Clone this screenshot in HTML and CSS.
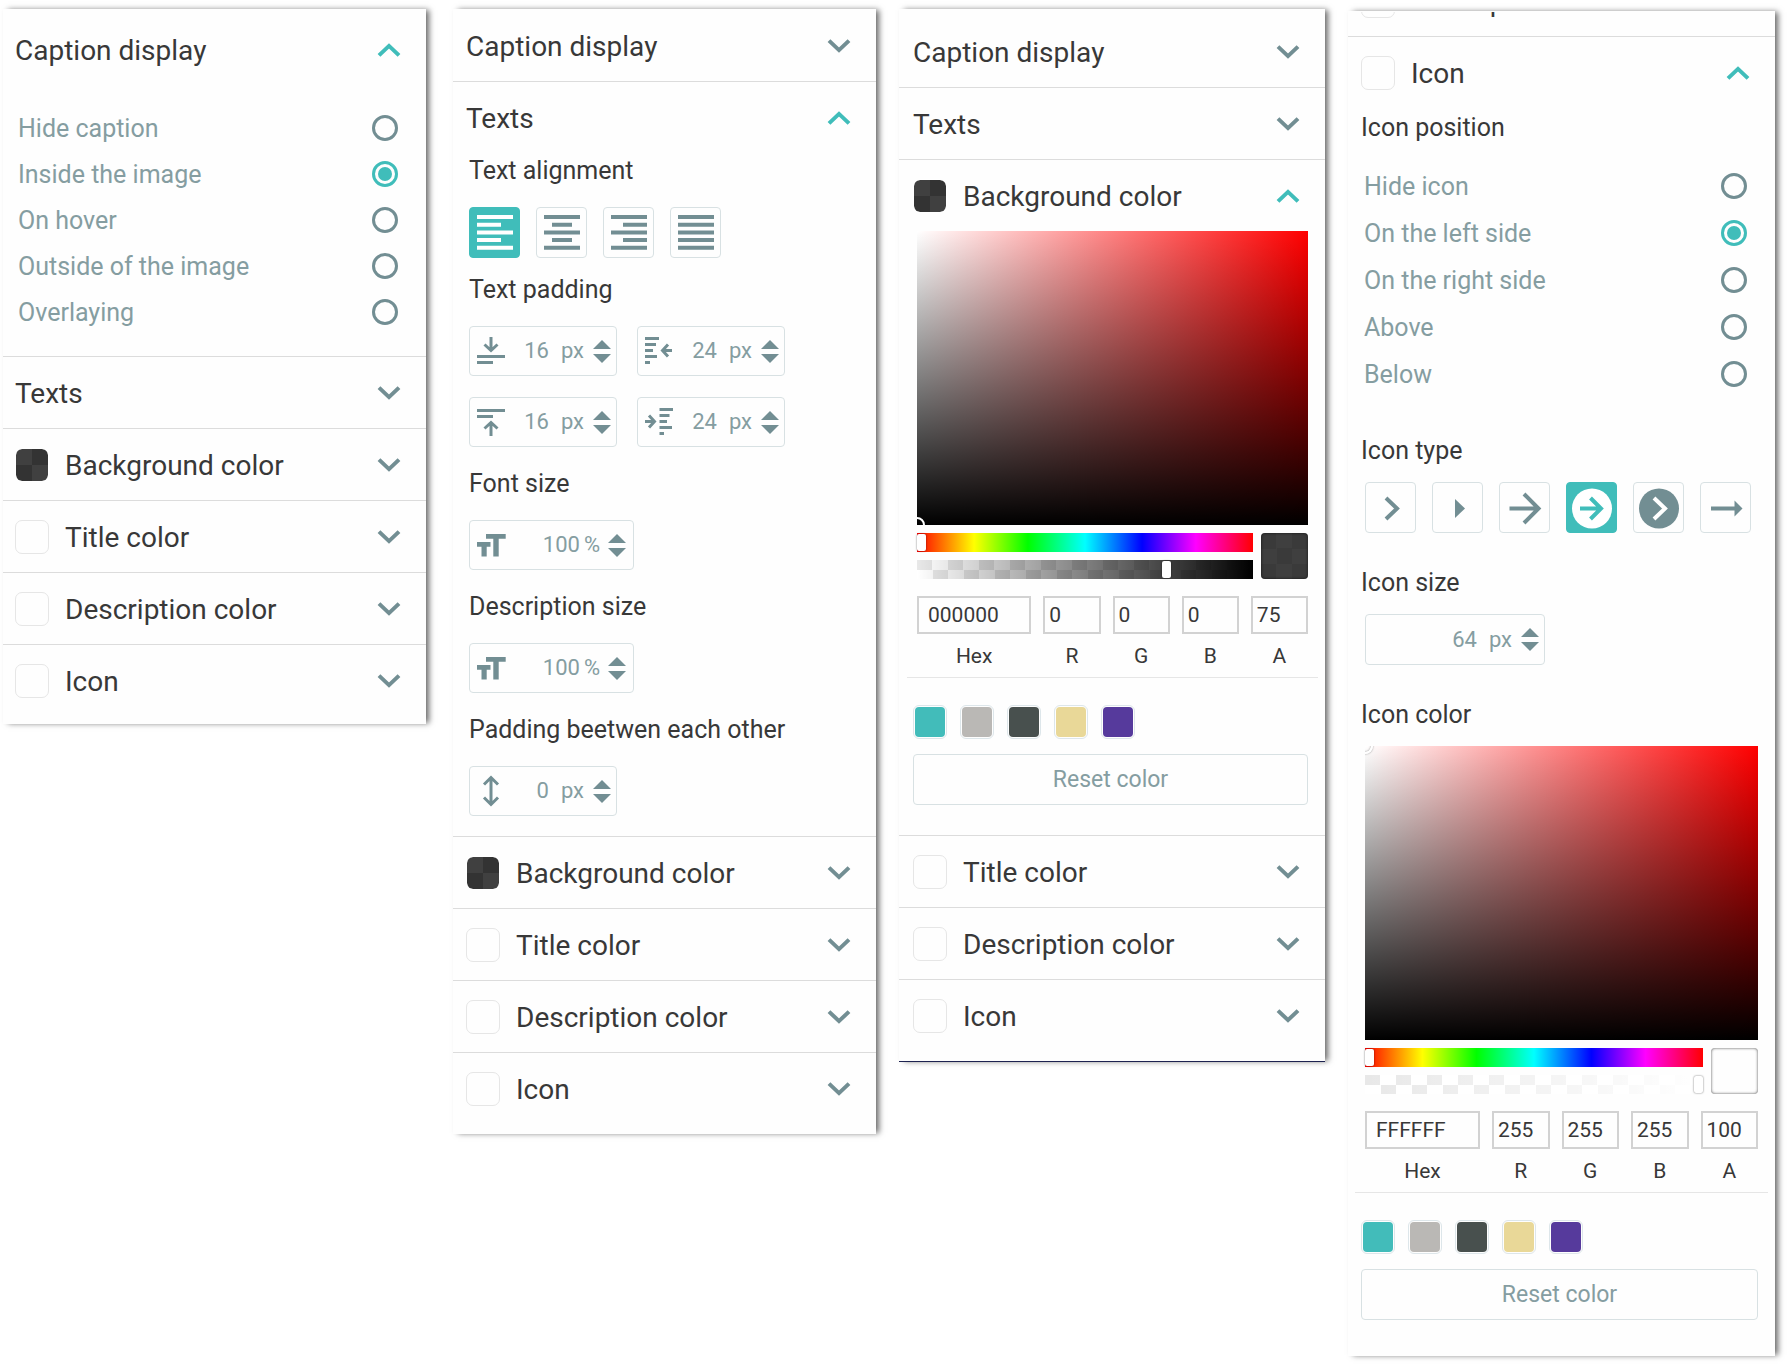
FILE: index.html
```html
<!DOCTYPE html>
<html lang="en">
<head>
<meta charset="utf-8">
<meta name="viewport" content="width=device-width, initial-scale=1">
<title>Caption settings</title>
<link rel="stylesheet" href="styles.css">
</head>
<body>
<svg class="sprite" aria-hidden="true">
  <symbol id="chevron-down" viewBox="0 0 24 14"><path d="M2 1.6 12 11.1 22 1.6" fill="none" stroke="currentColor" stroke-width="4"/></symbol>
  <symbol id="chevron-up" viewBox="0 0 24 14"><path d="M2 12.4 12 2.9 22 12.4" fill="none" stroke="currentColor" stroke-width="4"/></symbol>
  <symbol id="arrow-up" viewBox="0 0 18 9"><path d="M0 9 9 0 18 9z" fill="currentColor"/></symbol>
  <symbol id="arrow-down" viewBox="0 0 18 9"><path d="M0 0 9 9 18 0z" fill="currentColor"/></symbol>
  <symbol id="text-size" viewBox="0 0 29 23"><path d="M0 8h13.5v4.7H9.7v9.8H4.5v-9.8H0zM9 0h19.7v4.7h-7v17.8h-5.4V4.7H9z" fill="currentColor"/></symbol>
</svg>

<main class="board">

  <section class="panel panel-display">
    <h2 class="row"><button type="button" class="toggle open" aria-expanded="true"><span class="name">Caption display</span><svg class="chevron"><use href="#chevron-up"/></svg></button></h2>
    <div class="options">
      <label class="option">Hide caption<input type="radio" name="caption"></label>
      <label class="option">Inside the image<input type="radio" name="caption" checked></label>
      <label class="option">On hover<input type="radio" name="caption"></label>
      <label class="option">Outside of the image<input type="radio" name="caption"></label>
      <label class="option">Overlaying<input type="radio" name="caption"></label>
    </div>
    <h2 class="row"><button type="button" class="toggle"><span class="name">Texts</span><svg class="chevron"><use href="#chevron-down"/></svg></button></h2>
    <h2 class="row"><button type="button" class="toggle"><span class="swatch dark"></span><span class="name">Background color</span><svg class="chevron"><use href="#chevron-down"/></svg></button></h2>
    <h2 class="row"><button type="button" class="toggle"><span class="swatch"></span><span class="name">Title color</span><svg class="chevron"><use href="#chevron-down"/></svg></button></h2>
    <h2 class="row"><button type="button" class="toggle"><span class="swatch"></span><span class="name">Description color</span><svg class="chevron"><use href="#chevron-down"/></svg></button></h2>
    <h2 class="row"><button type="button" class="toggle"><span class="swatch"></span><span class="name">Icon</span><svg class="chevron"><use href="#chevron-down"/></svg></button></h2>
  </section>

  <section class="panel panel-texts">
    <h2 class="row"><button type="button" class="toggle"><span class="name">Caption display</span><svg class="chevron"><use href="#chevron-down"/></svg></button></h2>
    <h2 class="row"><button type="button" class="toggle open" aria-expanded="true"><span class="name">Texts</span><svg class="chevron"><use href="#chevron-up"/></svg></button></h2>
    <div class="fields">
      <div class="field align-field">
        <h3 class="label">Text alignment</h3>
        <div class="tiles">
          <button type="button" class="tile active" aria-label="Left"><svg width="36" height="35" viewBox="0 0 36 35"><path d="M0 2h36M0 9.7h24M0 17.4h36M0 25h24M0 32.7h36"/></svg></button>
          <button type="button" class="tile" aria-label="Center"><svg width="36" height="35" viewBox="0 0 36 35"><path d="M0 2h36M8 9.7h20M0 17.4h36M8 25h20M0 32.7h36"/></svg></button>
          <button type="button" class="tile" aria-label="Right"><svg width="36" height="35" viewBox="0 0 36 35"><path d="M0 2h36M12 9.7h24M0 17.4h36M12 25h24M0 32.7h36"/></svg></button>
          <button type="button" class="tile" aria-label="Justify"><svg width="36" height="35" viewBox="0 0 36 35"><path d="M0 2h36M0 9.7h36M0 17.4h36M0 25h36M0 32.7h36"/></svg></button>
        </div>
      </div>
      <div class="field">
        <h3 class="label">Text padding</h3>
        <div class="pairs">
          <div class="stepper">
            <svg class="glyph" width="28" height="28" viewBox="0 0 28 28"><path d="M14 0v13M7.500 7.500 14 13.500l6.500-6M0 19.500h28M0 25.500h16"/></svg>
            <input type="number" value="16" aria-label="Bottom padding"><span class="unit">px</span>
            <span class="spin"><button type="button" aria-label="Increase"><svg><use href="#arrow-up"/></svg></button><button type="button" aria-label="Decrease"><svg><use href="#arrow-down"/></svg></button></span>
          </div>
          <div class="stepper">
            <svg class="glyph" width="28" height="28" viewBox="0 0 28 28"><path d="M0 1.500h14M0 7.500h11M0 13.500h8M0 19.500h12M0 25.500h5M27 13.500h-9M23 7.500l-5.500 6 5.500 6"/></svg>
            <input type="number" value="24" aria-label="Right padding"><span class="unit">px</span>
            <span class="spin"><button type="button" aria-label="Increase"><svg><use href="#arrow-up"/></svg></button><button type="button" aria-label="Decrease"><svg><use href="#arrow-down"/></svg></button></span>
          </div>
          <div class="stepper">
            <svg class="glyph" width="28" height="28" viewBox="0 0 28 28"><path d="M14 28V15M7.500 20.500 14 14.500l6.500 6M0 2.500h28M0 8.500h16"/></svg>
            <input type="number" value="16" aria-label="Top padding"><span class="unit">px</span>
            <span class="spin"><button type="button" aria-label="Increase"><svg><use href="#arrow-up"/></svg></button><button type="button" aria-label="Decrease"><svg><use href="#arrow-down"/></svg></button></span>
          </div>
          <div class="stepper">
            <svg class="glyph" width="28" height="28" viewBox="0 0 28 28"><path d="M14.500 1.500h13.500M14.500 7.500h10M14.500 13.500h7.500M14.500 19.500h12.500M14.500 25.500h4.500M0 13.500h9M4 7.500l5.500 6-5.500 6"/></svg>
            <input type="number" value="24" aria-label="Left padding"><span class="unit">px</span>
            <span class="spin"><button type="button" aria-label="Increase"><svg><use href="#arrow-up"/></svg></button><button type="button" aria-label="Decrease"><svg><use href="#arrow-down"/></svg></button></span>
          </div>
        </div>
      </div>
      <div class="field">
        <label class="label" for="font-size">Font size</label>
        <div class="stepper percent">
          <svg class="glyph" width="29" height="23"><use href="#text-size"/></svg>
          <input type="number" id="font-size" value="100"><span class="unit">%</span>
          <span class="spin"><button type="button" aria-label="Increase"><svg><use href="#arrow-up"/></svg></button><button type="button" aria-label="Decrease"><svg><use href="#arrow-down"/></svg></button></span>
        </div>
      </div>
      <div class="field">
        <label class="label" for="description-size">Description size</label>
        <div class="stepper percent">
          <svg class="glyph" width="29" height="23"><use href="#text-size"/></svg>
          <input type="number" id="description-size" value="100"><span class="unit">%</span>
          <span class="spin"><button type="button" aria-label="Increase"><svg><use href="#arrow-up"/></svg></button><button type="button" aria-label="Decrease"><svg><use href="#arrow-down"/></svg></button></span>
        </div>
      </div>
      <div class="field">
        <label class="label" for="between">Padding beetwen each other</label>
        <div class="stepper">
          <svg class="glyph" width="28" height="32" viewBox="0 0 28 32"><path stroke-width="3.500" d="M14 3v26M7 9.500 14 2.500l7 7M7 22.500l7 7 7-7"/></svg>
          <input type="number" id="between" value="0"><span class="unit">px</span>
          <span class="spin"><button type="button" aria-label="Increase"><svg><use href="#arrow-up"/></svg></button><button type="button" aria-label="Decrease"><svg><use href="#arrow-down"/></svg></button></span>
        </div>
      </div>
    </div>
    <h2 class="row"><button type="button" class="toggle"><span class="swatch dark"></span><span class="name">Background color</span><svg class="chevron"><use href="#chevron-down"/></svg></button></h2>
    <h2 class="row"><button type="button" class="toggle"><span class="swatch"></span><span class="name">Title color</span><svg class="chevron"><use href="#chevron-down"/></svg></button></h2>
    <h2 class="row"><button type="button" class="toggle"><span class="swatch"></span><span class="name">Description color</span><svg class="chevron"><use href="#chevron-down"/></svg></button></h2>
    <h2 class="row"><button type="button" class="toggle"><span class="swatch"></span><span class="name">Icon</span><svg class="chevron"><use href="#chevron-down"/></svg></button></h2>
  </section>

  <section class="panel panel-background">
    <h2 class="row"><button type="button" class="toggle"><span class="name">Caption display</span><svg class="chevron"><use href="#chevron-down"/></svg></button></h2>
    <h2 class="row"><button type="button" class="toggle"><span class="name">Texts</span><svg class="chevron"><use href="#chevron-down"/></svg></button></h2>
    <h2 class="row"><button type="button" class="toggle open" aria-expanded="true"><span class="swatch dark"></span><span class="name">Background color</span><svg class="chevron"><use href="#chevron-up"/></svg></button></h2>
    <div class="picker picker-black">
      <div class="canvas"><span class="handle"></span></div>
      <div class="sliders">
        <div class="tracks">
          <input type="range" class="hue" min="0" max="360" value="0" aria-label="Hue">
          <input type="range" class="alpha" min="0" max="100" value="75" aria-label="Opacity">
        </div>
        <span class="preview"></span>
      </div>
      <div class="channels">
        <label><input type="text" value="000000">Hex</label>
        <label><input type="text" value="0">R</label>
        <label><input type="text" value="0">G</label>
        <label><input type="text" value="0">B</label>
        <label><input type="text" value="75">A</label>
      </div>
      <hr>
      <div class="presets">
        <button type="button" class="preset teal" aria-label="Teal"></button>
        <button type="button" class="preset grey" aria-label="Grey"></button>
        <button type="button" class="preset slate" aria-label="Slate"></button>
        <button type="button" class="preset sand" aria-label="Sand"></button>
        <button type="button" class="preset violet" aria-label="Violet"></button>
      </div>
      <button type="button" class="reset">Reset color</button>
    </div>
    <h2 class="row"><button type="button" class="toggle"><span class="swatch"></span><span class="name">Title color</span><svg class="chevron"><use href="#chevron-down"/></svg></button></h2>
    <h2 class="row"><button type="button" class="toggle"><span class="swatch"></span><span class="name">Description color</span><svg class="chevron"><use href="#chevron-down"/></svg></button></h2>
    <h2 class="row"><button type="button" class="toggle"><span class="swatch"></span><span class="name">Icon</span><svg class="chevron"><use href="#chevron-down"/></svg></button></h2>
  </section>

  <section class="panel panel-icon">
    <h2 class="row scrolled"><button type="button" class="toggle"><span class="swatch"></span><span class="name">Description color</span><svg class="chevron"><use href="#chevron-down"/></svg></button></h2>
    <h2 class="row"><button type="button" class="toggle open" aria-expanded="true"><span class="swatch"></span><span class="name">Icon</span><svg class="chevron"><use href="#chevron-up"/></svg></button></h2>
    <h3 class="label">Icon position</h3>
    <div class="options">
      <label class="option">Hide icon<input type="radio" name="icon"></label>
      <label class="option">On the left side<input type="radio" name="icon" checked></label>
      <label class="option">On the right side<input type="radio" name="icon"></label>
      <label class="option">Above<input type="radio" name="icon"></label>
      <label class="option">Below<input type="radio" name="icon"></label>
    </div>
    <h3 class="label">Icon type</h3>
    <div class="tiles">
      <button type="button" class="tile" aria-label="Chevron"><svg width="44" height="44" viewBox="0 0 44 44"><path d="M17 12 28 22.500 17 33"/></svg></button>
      <button type="button" class="tile" aria-label="Triangle"><svg width="44" height="44" viewBox="0 0 44 44"><path class="solid" d="M19 13 29 22.500 19 32z"/></svg></button>
      <button type="button" class="tile" aria-label="Arrow"><svg width="44" height="44" viewBox="0 0 44 44"><path d="M6.500 22.500H36M21 8 35.500 22.500 21 37"/></svg></button>
      <button type="button" class="tile active" aria-label="Circled arrow"><svg width="44" height="44" viewBox="0 0 44 44"><circle class="solid" cx="22" cy="22.500" r="20"/><path class="cut" d="M10 22.500H31M20.500 12 31 22.500 20.500 33"/></svg></button>
      <button type="button" class="tile" aria-label="Circled chevron"><svg width="44" height="44" viewBox="0 0 44 44"><circle class="solid" cx="22" cy="22.500" r="20"/><path class="cut" d="M17 12 28 22.500 17 33"/></svg></button>
      <button type="button" class="tile" aria-label="Long arrow"><svg width="44" height="44" viewBox="0 0 44 44"><path d="M7 22.500H32"/><path class="solid" d="M30.500 14.500 38.500 22.500 30.500 30.500z"/></svg></button>
    </div>
    <label class="label" for="icon-size">Icon size</label>
    <div class="stepper wide">
      <input type="number" id="icon-size" value="64"><span class="unit">px</span>
      <span class="spin"><button type="button" aria-label="Increase"><svg><use href="#arrow-up"/></svg></button><button type="button" aria-label="Decrease"><svg><use href="#arrow-down"/></svg></button></span>
    </div>
    <h3 class="label">Icon color</h3>
    <div class="picker picker-white">
      <div class="canvas"><span class="handle"></span></div>
      <div class="sliders">
        <div class="tracks">
          <input type="range" class="hue" min="0" max="360" value="0" aria-label="Hue">
          <input type="range" class="alpha" min="0" max="100" value="100" aria-label="Opacity">
        </div>
        <span class="preview"></span>
      </div>
      <div class="channels">
        <label><input type="text" value="FFFFFF">Hex</label>
        <label><input type="text" value="255">R</label>
        <label><input type="text" value="255">G</label>
        <label><input type="text" value="255">B</label>
        <label><input type="text" value="100">A</label>
      </div>
      <hr>
      <div class="presets">
        <button type="button" class="preset teal" aria-label="Teal"></button>
        <button type="button" class="preset grey" aria-label="Grey"></button>
        <button type="button" class="preset slate" aria-label="Slate"></button>
        <button type="button" class="preset sand" aria-label="Sand"></button>
        <button type="button" class="preset violet" aria-label="Violet"></button>
      </div>
      <button type="button" class="reset">Reset color</button>
    </div>
  </section>

</main>
</body>
</html>
```
FILE: styles.css
```css
:root {
  --teal: #40bdba;
  --slate: #728e93;
  --soft: #859da1;
  --ink: #383838;
  --line: #dcdcdc;
  --box: #d8e1e3;
}

* {
  box-sizing: border-box;
}

body {
  margin: 0;
  background: #fff;
  color: var(--ink);
  font-family: Roboto, "Liberation Sans", sans-serif;
}

button,
input {
  margin: 0;
  padding: 0;
  border: 0;
  background: none;
  color: inherit;
  font: inherit;
}

h2,
h3 {
  margin: 0;
  font-weight: 400;
}

svg {
  display: block;
}

.sprite {
  display: none;
}

/* Panels */

.board {
  display: flex;
  align-items: flex-start;
  padding: 9px 15px 9px 3px;
}

.panel {
  --inset: 13px;
  flex: 423 1 0;
  min-width: 0;
  margin-left: 23px;
  background: #fefefe;
  box-shadow: 4px 0 6px -1px rgba(0, 0, 0, 0.6);
}

.panel-display {
  --inset: 12px;
  margin-left: 0;
  padding: 4px 0 8px;
}

.panel-texts {
  margin-left: 27px;
  padding-bottom: 10px;
}

.panel-background {
  --inset: 14px;
  flex-grow: 426;
  padding: 6px 0 10px;
  border-bottom: 1px solid #1d2250;
}

.panel-icon {
  flex-grow: 427;
  margin-top: 2px;
  padding-bottom: 36px;
}

.row {
  border-top: 1px solid var(--line);
  font-size: 28px;
  line-height: 32px;
}

.row:first-child {
  border-top-color: transparent;
}

.toggle {
  display: flex;
  align-items: center;
  width: 100%;
  height: 71px;
  padding: 0 25px 0 var(--inset);
  text-align: left;
}

.name {
  flex: 1;
  padding-top: 3px;
}

.chevron {
  width: 24px;
  height: 14px;
  color: var(--slate);
}

.open .chevron {
  color: var(--teal);
}

.scrolled {
  display: flex;
  align-items: flex-end;
  height: 25px;
  overflow: hidden;
}

.scrolled .toggle {
  flex-shrink: 0;
}

.swatch {
  width: 34px;
  height: 34px;
  margin-right: 16px;
  border: 1px solid #e6e6e6;
  border-radius: 7px;
}

.swatch.dark {
  border-color: #fff;
  background: conic-gradient(#333 25%, #404040 0 50%, #333 0 75%, #404040 0) padding-box;
}

/* Radio lists */

.options {
  padding: 21px 28px 20px 15px;
}

.option {
  display: flex;
  align-items: center;
  justify-content: space-between;
  height: 46px;
  color: var(--soft);
  font-size: 25px;
  line-height: 30px;
}

.option input {
  display: grid;
  place-items: center;
  width: 26px;
  height: 26px;
  margin-bottom: 2px;
  border: 3px solid var(--slate);
  border-radius: 50%;
  appearance: none;
}

.option input:checked {
  border-color: var(--teal);
}

.option input:checked::before {
  width: 14px;
  height: 14px;
  border-radius: 50%;
  background: var(--teal);
  content: "";
}

/* Fields */

.fields {
  padding: 3px 16px 0;
}

.field {
  display: flex;
  flex-direction: column;
  gap: 21px;
  padding-bottom: 22px;
}

.align-field {
  padding-bottom: 17px;
}

.field:last-child {
  padding-bottom: 20px;
}

.label {
  display: block;
  font-size: 25px;
  line-height: 30px;
}

.tiles {
  display: flex;
  gap: 16px;
}

.tile {
  display: grid;
  place-items: center;
  width: 51px;
  height: 51px;
  border: 1px solid var(--box);
  border-radius: 4px;
  color: var(--slate);
}

.tile.active {
  border-color: var(--teal);
  background: var(--teal);
  color: #fff;
}

.tile path {
  fill: none;
  stroke: currentColor;
  stroke-width: 4;
}

.tile .solid {
  fill: currentColor;
  stroke: none;
}

.tile .cut {
  stroke: #fff;
}

.tile.active .cut {
  stroke: var(--teal);
}

.pairs {
  display: grid;
  grid-template-columns: 148px 148px;
  gap: 21px 20px;
}

.stepper {
  display: flex;
  align-items: center;
  width: 148px;
  height: 50px;
  padding: 0 5px 0 7px;
  border: 1px solid var(--box);
  border-radius: 4px;
  color: var(--soft);
  font-size: 22px;
  line-height: 26px;
}

.stepper.percent {
  width: 165px;
  padding-right: 7px;
}

.stepper.wide {
  width: 180px;
}

.glyph {
  flex-shrink: 0;
  color: var(--slate);
}

.glyph path {
  fill: none;
  stroke: currentColor;
  stroke-width: 3;
}

.stepper input {
  flex: 1;
  min-width: 0;
  text-align: right;
  appearance: textfield;
}

.stepper input::-webkit-inner-spin-button {
  display: none;
}

.unit {
  padding: 0 9px 0 12px;
}

.percent .unit {
  padding: 0 8px 0 4px;
}

.spin {
  display: grid;
  gap: 5px;
}

.spin button,
.spin svg {
  display: block;
  width: 18px;
  height: 9px;
  color: var(--slate);
}

/* Icon panel */

.panel-icon > .label {
  padding: 0 13px;
}

.panel-icon > .row + .label {
  padding-top: 5px;
}

.panel-icon .options {
  padding: 20px 28px 38px 16px;
}

.panel-icon .option {
  height: 47px;
}

.panel-icon .tiles,
.panel-icon .stepper {
  margin: 16px 17px 35px;
}

.panel-icon .stepper {
  height: 51px;
}

/* Color picker */

.picker {
  padding: 0 17px 30px var(--inset);
}

.panel-icon .picker {
  padding-top: 16px;
  padding-bottom: 0;
}

.canvas,
.sliders,
.channels {
  margin-left: 4px;
}

.canvas {
  position: relative;
  height: 294px;
  overflow: hidden;
  background:
    linear-gradient(to top, #000, transparent),
    linear-gradient(to right, #fff, #f00);
}

.handle {
  position: absolute;
  left: -8px;
  width: 16px;
  height: 16px;
  border: 2px solid #fff;
  border-radius: 50%;
}

.picker-black .handle {
  bottom: -8px;
}

.picker-white .handle {
  top: -8px;
  box-shadow: 0 0 2px #888, inset 0 0 2px #888;
}

.sliders {
  display: flex;
  gap: 8px;
  padding: 8px 0 17px;
}

.tracks {
  display: grid;
  flex: 1;
  gap: 8px;
}

.tracks input {
  width: 100%;
  height: 19px;
  appearance: none;
}

.hue {
  background: linear-gradient(to right, #f00, #ff0 17%, #0f0 33%, #0ff 50%, #00f 67%, #f0f 83%, #f00);
}

.alpha {
  background:
    linear-gradient(to right, var(--clear), var(--full)),
    conic-gradient(#fff 25%, #e8e8e8 0 50%, #fff 0 75%, #e8e8e8 0) 0 0 / 31px 20px;
}

.picker-black {
  --clear: rgba(0, 0, 0, 0);
  --full: #000;
}

.picker-white {
  --clear: rgba(255, 255, 255, 0);
  --full: #fff;
}

.tracks input::-webkit-slider-thumb {
  width: 9px;
  height: 17px;
  border-radius: 2px;
  background: #fff;
  box-shadow: 0 0 2px rgba(0, 0, 0, 0.6);
  appearance: none;
}

.preview {
  width: 47px;
  height: 46px;
  border-radius: 4px;
  box-shadow: inset 0 0 3px rgba(0, 0, 0, 0.7);
}

.picker-black .preview {
  background: conic-gradient(#3f3f3f 25%, #3a3a3a 0 50%, #3f3f3f 0 75%, #3a3a3a 0) 0 0 / 31px 31px;
}

.channels {
  display: grid;
  grid-template-columns: 2fr 1fr 1fr 1fr 1fr;
  gap: 12px;
  font-size: 21px;
  line-height: 24px;
  text-align: center;
}

.channels input {
  display: block;
  width: 100%;
  height: 38px;
  margin-bottom: 10px;
  padding-left: 4px;
  border: 2px solid #d2d2d2;
}

.channels label:first-child input {
  padding-left: 9px;
}

hr {
  height: 1px;
  margin: 9px -10px 27px -6px;
  border: 0;
  background: #e6e6e6;
}

.presets {
  display: flex;
  gap: 13px;
}

.preset {
  width: 34px;
  height: 34px;
  padding: 1px;
  border: 1px solid #dde6ea;
  border-radius: 6px;
  background-clip: content-box;
}

.preset.teal { background-color: #42bcba; }
.preset.grey { background-color: #bab8b5; }
.preset.slate { background-color: #48504e; }
.preset.sand { background-color: #e9d898; }
.preset.violet { background-color: #563a9c; }

.reset {
  display: block;
  width: 100%;
  height: 51px;
  margin-top: 15px;
  border: 1px solid var(--box);
  border-radius: 4px;
  color: var(--soft);
  font-size: 23px;
  line-height: 26px;
}
```
